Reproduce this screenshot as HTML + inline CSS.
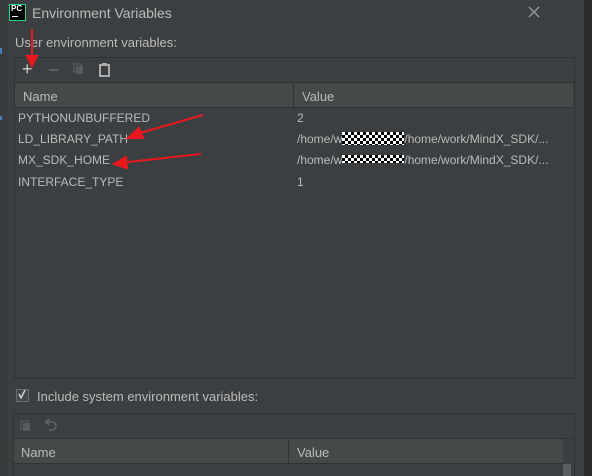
<!DOCTYPE html>
<html><head><style>
html,body{margin:0;width:592px;height:476px;overflow:hidden}
body{background:#3c3f41;position:relative;font-family:"Liberation Sans",Arial,sans-serif;font-size:12px;color:#bbbbbb}
.a{position:absolute}
.t{white-space:nowrap}
</style></head><body>
<div class="a" style="left:0;top:0;width:8px;height:476px;background:#393b3d"></div>
<div class="a" style="left:0;top:48px;width:2px;height:6px;background:#4a7fbf"></div>
<div class="a" style="left:0;top:116px;width:2px;height:4px;background:#4a7fbf"></div>
<div class="a" style="left:584px;top:0;width:8px;height:476px;background:#2b2b2b"></div>
<div class="a" style="left:9px;top:4px;width:15px;height:15px;background:#000;border:1px solid #21d789"></div>
<div class="a t" style="left:11px;top:4px;color:#fff;font-size:8px;font-weight:bold">PC</div>
<div class="a" style="left:12px;top:16px;width:6px;height:1px;background:#fff"></div>
<div class="a t" style="left:32px;top:5px;font-size:14px;color:#bbb">Environment Variables</div>
<div class="a t" style="left:15px;top:35px;font-size:13px">User environment variables:</div>
<div class="a" style="left:14px;top:57px;width:559px;height:320px;border:1px solid #323232;background:#3c3f41"></div>
<div class="a" style="left:15px;top:82px;width:558px;height:1px;background:#323232"></div>
<div class="a t" style="left:22px;top:59px;font-size:18px;color:#ccc">+</div>
<div class="a" style="left:49px;top:69px;width:10px;height:2px;background:#5a5d5f"></div>
<div class="a" style="left:15px;top:83px;width:558px;height:24px;background:#45494a;border-bottom:1px solid #323232"></div>
<div class="a" style="left:293px;top:84px;width:1px;height:23px;background:#323232"></div>
<div class="a t" style="left:23px;top:89px;font-size:13px">Name</div>
<div class="a t" style="left:302px;top:89px;font-size:13px">Value</div>
<div class="a t" style="left:18px;top:111px">PYTHONUNBUFFERED</div>
<div class="a t" style="left:18px;top:132px">LD_LIBRARY_PATH</div>
<div class="a t" style="left:18px;top:153px">MX_SDK_HOME</div>
<div class="a t" style="left:18px;top:175px">INTERFACE_TYPE</div>
<div class="a t" style="left:297px;top:111px">2</div>
<div class="a t" style="left:297px;top:132px">/home/w<span style="display:inline-block;width:62px;height:13px;vertical-align:-2px;background:repeating-conic-gradient(#000 0 25%,#fff 0 50%) 0 0/6px 6px"></span>/home/work/MindX_SDK/...</div>
<div class="a t" style="left:297px;top:153px">/home/w<span style="display:inline-block;width:62px;height:8px;vertical-align:1px;background:repeating-conic-gradient(#000 0 25%,#fff 0 50%) 0 0/6px 6px"></span>/home/work/MindX_SDK/...</div>
<div class="a t" style="left:297px;top:175px">1</div>
<div class="a" style="left:16px;top:389px;width:11px;height:11px;border:1px solid #6b6b6b;background:#43494a"></div>
<div class="a t" style="left:37px;top:389px;font-size:13px">Include system environment variables:</div>
<div class="a" style="left:13px;top:413px;width:560px;height:70px;border:1px solid #323232"></div>
<div class="a" style="left:14px;top:438px;width:559px;height:1px;background:#323232"></div>
<div class="a" style="left:14px;top:439px;width:549px;height:24px;background:#45494a;border-bottom:1px solid #323232"></div>
<div class="a" style="left:288px;top:440px;width:1px;height:23px;background:#323232"></div>
<div class="a t" style="left:21px;top:445px;font-size:13px">Name</div>
<div class="a t" style="left:297px;top:445px;font-size:13px">Value</div>
<div class="a" style="left:563px;top:464px;width:8px;height:12px;background:#5b5e60"></div>
<svg class="a" style="left:0;top:0" width="592" height="476">
<g stroke="#9a9a9a" stroke-width="1.3"><line x1="529" y1="7" x2="539" y2="17"/><line x1="539" y1="7" x2="529" y2="17"/></g>
<rect x="76" y="66" width="7" height="8" fill="#55585a"/><rect x="74" y="64" width="7" height="8" fill="none" stroke="#5e6163"/>
<rect x="100" y="65" width="9" height="11" fill="none" stroke="#ababab" stroke-width="2"/><rect x="102" y="63" width="5" height="3" fill="#ababab"/>
<rect x="23" y="423" width="7" height="8" fill="#55585a"/><rect x="21" y="421" width="7" height="8" fill="none" stroke="#5e6163"/>
<path d="M46 422 h6 a4 4 0 0 1 0 8 h-3" fill="none" stroke="#5e6163" stroke-width="1.6"/><polygon points="44,422 49,418 49,426" fill="#5e6163"/>
<polyline points="19,394 21,398 25,390" fill="none" stroke="#ccc" stroke-width="1.5"/>
<g stroke="#e8181c" stroke-width="2" fill="#e8181c">
<line x1="32" y1="29" x2="32" y2="60"/><polygon points="27,56 37,56 32,66"/>
<line x1="203" y1="115" x2="140" y2="133"/><polygon points="128,138 139,128 143,138"/>
<line x1="201" y1="154" x2="128" y2="162"/><polygon points="114,164 126,157 127,168"/>
</g></svg>
</body></html>
